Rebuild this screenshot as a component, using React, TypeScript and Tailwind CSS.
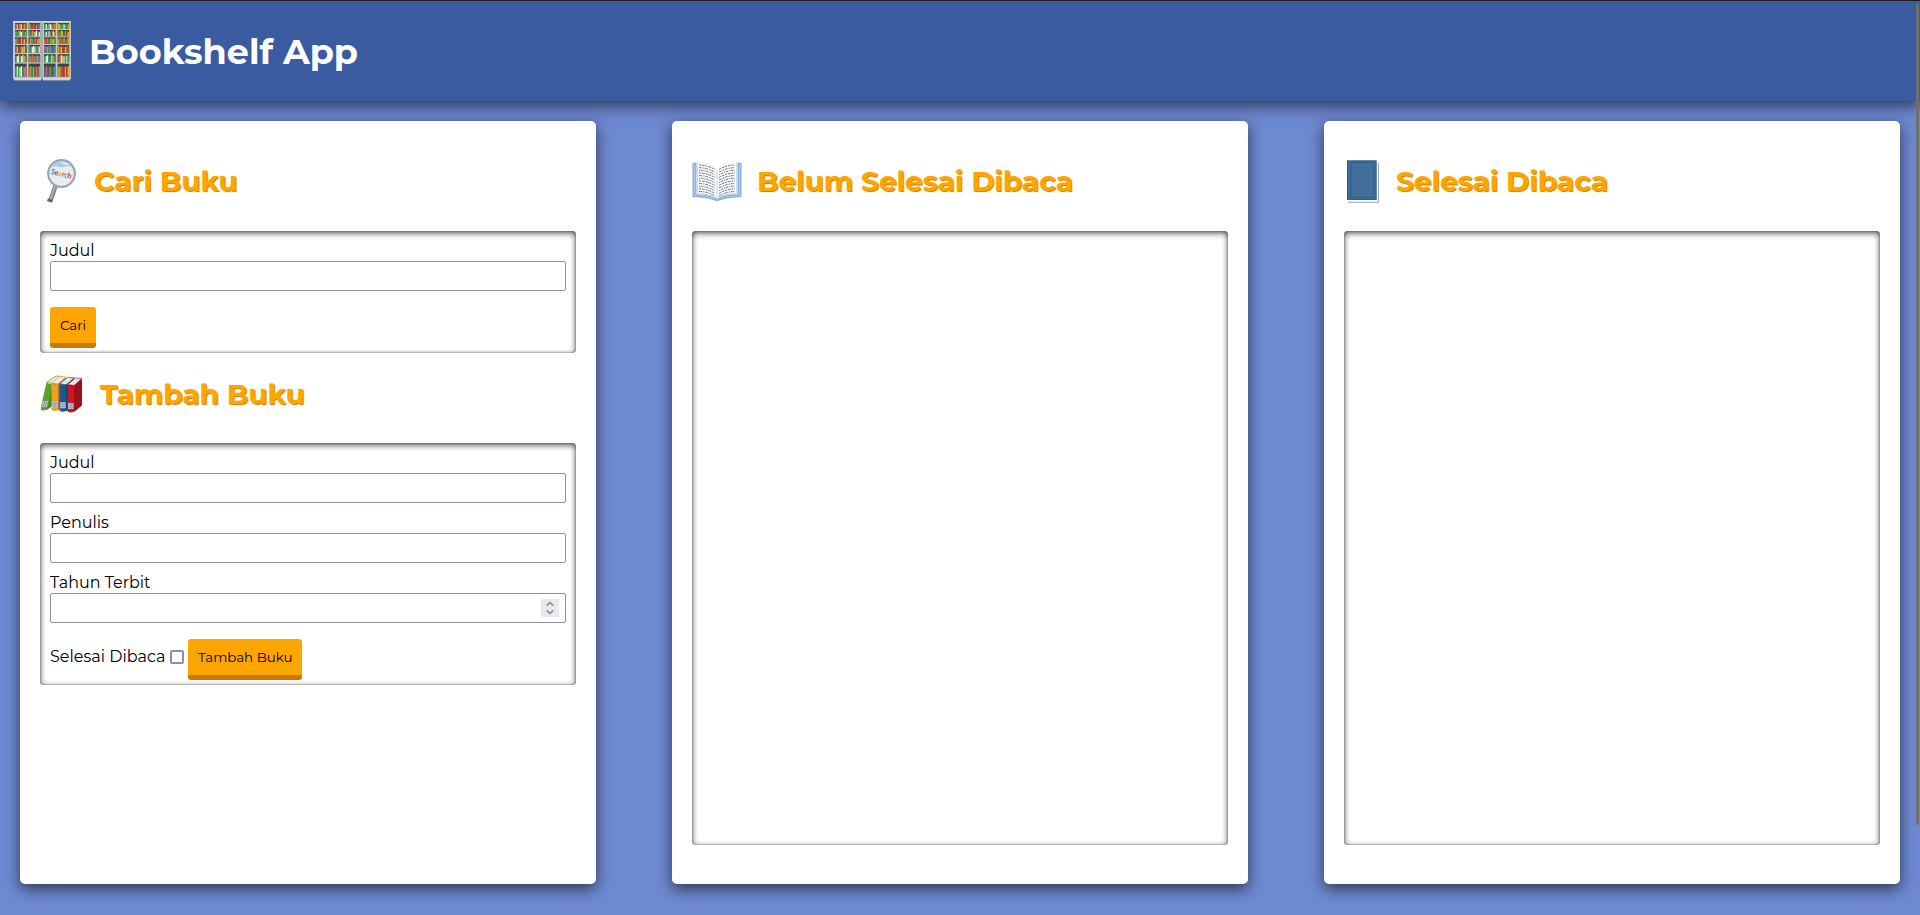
import React from "react";

const shelfRows: [number, number][] = [
  [2, 6], [9, 6.2], [16.3, 6.4], [24, 7.8], [33.2, 8], [42.6, 13],
];
const shelfColumns = [2, 15.6, 31, 44.6];
const rowBooks = [
  ["#2f8fc0 #e8c33a #d62b2b #f2a33a #b9d9c9 #c0392b #f39c12 #6b7f2a", "#e39a2d #7a8f2b #d43a3a #e0555a #c0392b #d67a7a #d43a3a #33a0c0", "#2aa84a #e9f3ea #2aa84a #8fd19a #e9f3ea #d9b92c #7b8d23 #e58f1a", "#f0a01e #e8d33a #2aa84a #2aa84a #e9f3ea #54b46a #2aa84a #f0a01e"],
  ["#f0a01e #2aa84a #2aa84a #e9f3ea #d8ead9 #e58f1a #2aa84a #5ab870", "#c0705a #2aa84a #f0a01e #2aa84a #d8ead9 #e9f3ea #2aa84a #d8ead9", "#2aa090 #e9f3ea #d43a3a #e9f3ea #2aa84a #d43a3a #e9f3ea #e58f1a", "#8a9a20 #2aa84a #d9b92c #f0a01e #2a8a4a #8a9a20 #d43a3a #d9b92c"],
  ["#d9b92c #2aa0b0 #d43a3a #c0392b #f0a01e #d43a3a #f0c030 #d43a3a", "#d43a3a #d9b92c #33a0b0 #c0392b #f08a2a #c0392b #d9b92c #f0a01e", "#e58f1a #d43a3a #e06a4a #2a8fb0 #8a9a20 #e58f1a #e9c33a #3aa05a", "#d9b92c #8a9a20 #e06a3a #d43a3a #d9b92c #c0392b #8a9a20 #d9b92c"],
  ["#3a9ac0 #d9b92c #c0392b #d43a3a #e58f1a #f0d040 #e9c33a #2a6fb0", "#d06a7a #2aa84a #e9f3ea #e9f3ea #d8ead9 #2aa84a #d06a7a #d8ead9", "#d06a5a #3a9ac0 #e58f1a #4a9ac0 #c0705a #3a9ac0 #2a6fb0 #4a9ac0", "#e58f1a #8a9a20 #e8c33a #d43a3a #c0392b #d9b92c #8a9a20 #d43a3a"],
  ["#2aa84a #e9f3ea #f0e0c0 #2aa84a #d8ead9 #e9f3ea #f0a01e #2aa84a", "#3a9ac0 #e58f1a #d06a5a #4a8ab0 #e58f1a #8a6a7a #f0a01e #2aa090", "#2aa84a #e9f3ea #e9f3ea #2aa84a #2aa84a #d8ead9 #e58f1a #2aa84a", "#d43a3a #2aa84a #e9f3ea #f0a01e #e9f3ea #2aa84a #d8ead9 #2aa84a"],
  ["#2aa84a #d8ead9 #2aa84a #e9f3ea #e9f3ea #2aa84a #d8707a #c86a7a", "#8a9a20 #e8a020 #2aa84a #e58f1a #a05a6a #c86a7a #2a9a70 #e58f1a", "#2a6fb0 #d06a5a #c0392b #2a7ac0 #8a9a20 #c0392b #2a7ac0 #3a9ad0", "#e58f1a #d9b92c #2aa84a #d43a3a #c0392b #f0a01e #d43a3a #d9b92c"],
];

function ShelfLogo() {
  return (
    <svg className="h-[60px] w-[58px]" viewBox="0 0 58 60">
      <rect x="0" y="0" width="58" height="58" fill="#c3c5c9" />
      <rect x="1" y="57" width="27" height="2.4" fill="#d3d3d3" />
      <rect x="30" y="57" width="27" height="2.4" fill="#d3d3d3" />
      <rect x="28.5" y="0" width="1" height="59" fill="#93979d" />
      <rect x="0" y="0" width="58" height="1" fill="#d9dadc" />
      {rowBooks.map((cols, r) =>
        cols.map((colors, c) => {
          const [y, h] = shelfRows[r];
          const x = shelfColumns[c];
          return (
            <g key={`${r}-${c}`}>
              <rect x={x} y={y} width="11.6" height={h} fill="#3c4448" />
              {colors.split(" ").map((fill, i) => {
                const gap = h * (r === 5 ? 0.2 : 0.12) + ((i * 7 + c * 3 + r) % 3) * 0.5;
                return <rect key={i} x={x + 0.2 + i * 1.4} y={y + gap} width="1.35" height={h - gap} fill={fill} />;
              })}
            </g>
          );
        }),
      )}
    </svg>
  );
}

function MagnifierIcon() {
  return (
    <svg className="ml-[6px] mr-[17px] h-[44px] w-[31px]" viewBox="0 0 31 44">
      <path d="M9.5 27 4.5 41.5" stroke="#85868e" strokeWidth="4.6" />
      <path d="M8.8 28 4.2 41" stroke="#b3b4bb" strokeWidth="1.5" />
      <path d="m2 39.3 4.8 1.8-1 2.7-4.9-1.7z" fill="#62646b" />
      <circle cx="15.5" cy="14.5" r="13.3" fill="#e6edf8" stroke="#a2a3ab" strokeWidth="2.2" />
      <path d="M5 8.5a12 12 0 0 1 21 0q-4-2.5-7-1t-6 .5T5 8.5z" fill="#a9cdee" />
      <path d="M14 4q6-1.500 9 2-5-1-9-2z" fill="#f7fbff" />
      <g transform="rotate(14 15 16)" fontFamily="Lato, sans-serif" fontSize="8" fontWeight="700">
        <text x="4.500" y="17.500" textLength="21" lengthAdjust="spacingAndGlyphs">
          <tspan fill="#2d86cf">S</tspan>
          <tspan fill="#d8343c">e</tspan>
          <tspan fill="#edb52c">a</tspan>
          <tspan fill="#2d86cf">r</tspan>
          <tspan fill="#2fa56a">c</tspan>
          <tspan fill="#d8343c">h</tspan>
        </text>
      </g>
    </svg>
  );
}

const standingBooks = [
  { x: 0, front: "#5ca12b", side: "#478a22", lean: true, y: 1 },
  { x: 10.5, front: "#f0a01c", side: "#b96a1c", lean: false, y: 1.5 },
  { x: 18.7, front: "#17578c", side: "#113f68", lean: false, y: 2.3 },
  { x: 26.5, front: "#cf1522", side: "#9c101a", lean: false, y: 3 },
];

function BooksIcon() {
  return (
    <svg className="ml-[1px] mr-[17px] h-[38px] w-[42px]" viewBox="0 0 42 38">
      {standingBooks.map((b) => (
        <g key={b.x} transform={`translate(${b.x} ${b.y})${b.lean ? " translate(7 0) skewX(-13)" : ""}`}>
          <path d="M6 7 14.500 .5V27.500L6 34.500z" fill={b.side} />
          <path d="M0 6.500 8 0l6.500 .5L6.500 7.500z" fill="#e9e9e6" stroke={b.front} strokeWidth=".7" />
          <path d="M0 6.500q3 2.500 6.500 .8V33q-3 2.800-6.500 .5z" fill={b.front} />
          <rect x=".5" y="25" width="5.500" height="6" fill="#c9d3dc" />
          <path d="M.5 27h5.500M.5 29.200h5.500M2.400 25v6M4.400 25v6" stroke="#71879a" strokeWidth=".6" />
        </g>
      ))}
    </svg>
  );
}

function OpenBookIcon() {
  return (
    <svg className="mr-[15px] h-[40px] w-[50px]" viewBox="0 0 50 40">
      <path d="M1 2.500 4 2v32q12-1 21 4 9-5 21-4V2l3 .5V35.500q-16 1-20 3-4 2-8 0-4-2-20-3z" fill="#a9c8e8" stroke="#6d96c8" strokeWidth=".8" />
      <path d="M4 1.500Q18 1 25 8.500 32 1 46 1.500V33.500Q32 33 25 38 18 33 4 33.500z" fill="#c6daf0" />
      <path d="M6 1.500Q18 2 25 8.500V37Q17 32 6 32z" fill="#fbfcff" />
      <path d="M44 1.500Q32 2 25 8.500V37q8-5 19-5z" fill="#fbfcff" />
      <path d="M25 9v28" stroke="#c3cfdf" strokeWidth="1" />
      {Array.from({ length: 11 }, (_, i) => {
        const y = 4 + i * 2.65;
        const dash = ["2 .8 3 .9", "3 1 1.500 .8", "1.200 .7 2.500 1"][i % 3];
        return (
          <g key={i} fill="none" stroke="#5e646d" strokeWidth=".9" strokeDasharray={dash}>
            <path d={`M7 ${y}Q15 ${y} 23 ${y + 4.5}`} />
            <path d={`M27 ${y + 4.5}Q35 ${y} 43 ${y}`} />
          </g>
        );
      })}
    </svg>
  );
}

function ClosedBookIcon() {
  return (
    <svg className="ml-[3px] mr-[17px] h-[43px] w-[32px]" viewBox="0 0 32 43">
      <path d="M1 41.500q0 .8 1 .8h29.400V3" fill="none" stroke="#7f9cc6" strokeWidth=".9" />
      <rect x="0" y=".5" width="29.500" height="39.500" fill="#416e9c" />
      <rect x=".4" y=".9" width="28.700" height="38.700" fill="none" stroke="#2f5a86" strokeWidth=".8" />
      <rect x="4" y="2.500" width="23" height="35" fill="none" stroke="#2f5c89" strokeWidth=".9" />
      <path d="M1.800 1v38.500" stroke="#35618e" strokeWidth=".6" />
    </svg>
  );
}

function Heading({ icon, className, children }: { icon: React.ReactNode; className: string; children: string }) {
  return (
    <div className={`flex shrink-0 items-center ${className}`}>
      {icon}
      <h2 className="text-[28px] leading-[34px] font-bold whitespace-nowrap text-[#ffa500] [text-shadow:1px_1px_1px_#c67a00]">
        {children}
      </h2>
    </div>
  );
}

const panel =
  "rounded-[4px] shadow-[inset_0_2px_6px_rgba(0,0,0,0.7),inset_0_0_2px_rgba(0,0,0,0.5)]";
const card =
  "h-[763px] w-[576px] shrink-0 flex flex-col rounded-[5px] bg-white px-5 shadow-[0_5px_15px_rgba(0,0,0,0.6)]";
const button =
  "h-[41px] rounded-[3px] border-b-[5px] border-[#c67a00] bg-[#ffa500] px-[10px] text-[13.333px] leading-[16px] text-black whitespace-nowrap";

function Field({ label, number }: { label: string; number?: boolean }) {
  return (
    <label className="block">
      <span className="block h-5 leading-[20px]">{label}</span>
      <span className="flex h-[30px] items-center justify-end rounded-[2px] border border-[#8f8f9d] bg-white pr-[6px]">
        <input type="text" className="h-full min-w-0 flex-1 outline-none" />
        {number && (
          <svg className="h-[18px] w-[18px] bg-[#e9e9ed]" viewBox="0 0 18 18" fill="none" stroke="#8f8f9d" strokeWidth="1.600">
            <path d="M5.700 6.700 9 3.700l3.300 3M5.700 11.300l3.300 3 3.300-3" />
          </svg>
        )}
      </span>
    </label>
  );
}

export default function App() {
  return (
    <div className="relative h-[915px] w-full overflow-hidden bg-[#6e89d2] font-['Montserrat','Inter',sans-serif] text-base text-black">
      <header className="flex h-[101px] items-center border-t border-[#1c1b22] bg-[#3b5ba1] pl-[13px] shadow-[0_5px_15px_rgba(0,0,0,0.6)]">
        <ShelfLogo />
        <h1 className="ml-[18px] text-[35px] leading-[43px] font-bold text-white">Bookshelf App</h1>
      </header>

      <main className="relative flex justify-between p-5">
        <section className={card}>
          <Heading icon={<MagnifierIcon />} className="h-[110px] pt-[10px]">Cari Buku</Heading>
          <form className={`${panel} h-[122px] px-[10px] pt-[10px]`}>
            <Field label="Judul" />
            <button type="button" className={`${button} mt-4 block`}>Cari</button>
          </form>
          <Heading icon={<BooksIcon />} className="h-[90px] pb-[8px]">Tambah Buku</Heading>
          <form className={`${panel} h-[242px] px-[10px] pt-[10px]`}>
            <div className="flex flex-col gap-[10px]">
              <Field label="Judul" />
              <Field label="Penulis" />
              <Field label="Tahun Terbit" number />
            </div>
            <div className="mt-4 flex items-center">
              <span className="-mt-[6px] w-[120px] leading-[20px] whitespace-nowrap">Selesai Dibaca</span>
              <input
                type="checkbox"
                className="-mt-[5px] mr-1 h-[14px] w-[14px] appearance-none rounded-[2px] border-2 border-[#8f8f9d] bg-white"
              />
              <button type="button" className={button}>Tambah Buku</button>
            </div>
          </form>
        </section>

        <section className={card}>
          <Heading icon={<OpenBookIcon />} className="h-[110px] pt-[10px]">Belum Selesai Dibaca</Heading>
          <div className={`${panel} h-[614px]`} />
        </section>

        <section className={card}>
          <Heading icon={<ClosedBookIcon />} className="h-[110px] pt-[10px]">Selesai Dibaca</Heading>
          <div className={`${panel} h-[614px]`} />
        </section>
      </main>

      <div className="absolute top-[3px] right-[1px] h-[822px] w-[3px] rounded-full bg-[#6f6f72]" />
    </div>
  );
}
